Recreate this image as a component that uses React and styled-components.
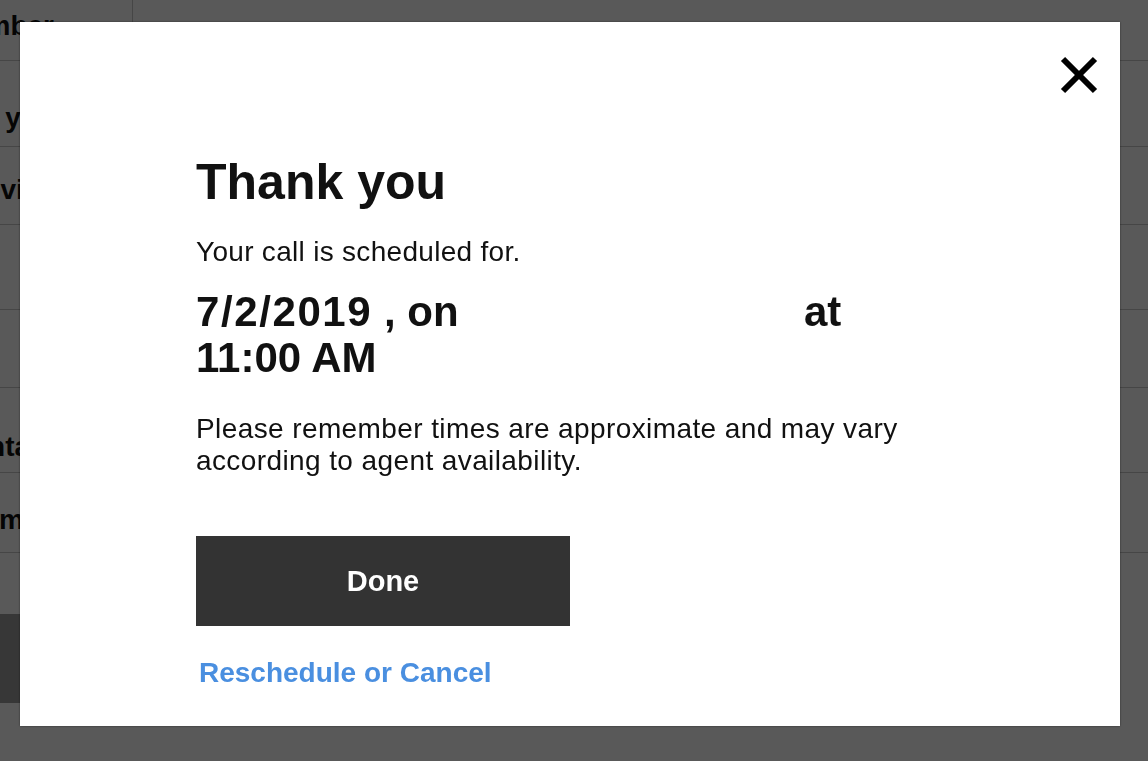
import { Fragment } from "react";
import styled, { createGlobalStyle } from "styled-components";

const GlobalStyle = createGlobalStyle`
  html, body {
    margin: 0;
    padding: 0;
    height: 100%;
    overflow: hidden;
  }
  body {
    font-family: "Liberation Sans", Arial, Helvetica, sans-serif;
    color: #111111;
    background: #ffffff;
  }
`;

// page behind the modal
const Page = styled.div`
  width: 1148px;
  height: 761px;
  display: grid;
  grid-template-columns: 133px 1fr;
  grid-template-rows: 61px 86px 78px 85px 78px 85px 80px 61px 89px 1fr;
  background: #ffffff;
`;

const LabelCell = styled.div`
  display: flex;
  justify-content: flex-end;
  align-items: ${(props) => (props.top ? "flex-start" : "center")};
  padding: ${(props) => (props.top ? "10px 78px 0 0" : `${props.offset || 0}px 78px 0 0`)};
  overflow: hidden;
  white-space: nowrap;
  font-size: 28px;
  font-weight: 700;
  border-bottom: 1px solid #c8c8c8;
  border-right: ${(props) => (props.divider ? "1px solid #c8c8c8" : "none")};
`;

const ValueCell = styled.div`
  border-bottom: 1px solid #c8c8c8;
`;

const Spacer = styled.div`
  grid-column: 1 / span 2;
`;

const PageButton = styled.div`
  grid-column: 1 / span 2;
  background: #9e9e9e;
  margin-right: 300px;
`;

const Overlay = styled.div`
  position: fixed;
  inset: 0;
  background: rgba(0, 0, 0, 0.65);
`;

const Modal = styled.div`
  position: fixed;
  left: 20px;
  top: 22px;
  width: 1100px;
  height: 704px;
  box-sizing: border-box;
  background: #ffffff;
  box-shadow: 0 0 2px rgba(0, 0, 0, 0.5);
  padding: 132px 0 0 176px;
`;

const CloseButton = styled.button`
  position: absolute;
  top: 33px;
  right: 20px;
  width: 42px;
  height: 40px;
  padding: 0;
  border: none;
  background: transparent;
  cursor: pointer;
  display: flex;
  align-items: center;
  justify-content: center;
`;

const Content = styled.div`
  width: 720px;
  display: flex;
  flex-direction: column;
  align-items: flex-start;
`;

const Title = styled.h1`
  margin: 0;
  font-size: 50px;
  line-height: 57.5px;
  font-weight: 700;
  color: #111111;
`;

const Text = styled.p`
  margin: ${(props) => props.margin || "0"};
  font-size: 28px;
  line-height: 32px;
  font-weight: 400;
  letter-spacing: ${(props) => props.spacing || "0.3px"};
  color: #111111;
`;

const Schedule = styled.p`
  margin: 21px 0 0 0;
  font-size: 42px;
  line-height: 46px;
  font-weight: 700;
  color: #111111;
`;

const DateText = styled.span`
  letter-spacing: 1.6px;
`;

const Blank = styled.span`
  display: inline-block;
  width: 322px;
`;

const DoneButton = styled.button`
  margin-top: 59px;
  width: 374px;
  height: 90px;
  border: none;
  background: #333333;
  color: #ffffff;
  font-family: "Liberation Sans", Arial, sans-serif;
  font-size: 29px;
  font-weight: 700;
  cursor: pointer;
`;

const LinkText = styled.a`
  margin: 31px 0 0 3px;
  font-size: 28px;
  line-height: 32px;
  font-weight: 700;
  color: #4a8fe0;
  text-decoration: none;
  cursor: pointer;
`;

const rows = [
  { label: "Phone Number", top: true, divider: true },
  { label: "Who do you", offset: 28 },
  { label: "Device", offset: 8 },
  { label: "" },
  { label: "" },
  { label: "Contact", offset: 34 },
  { label: "Email", offset: 14 },
];

const App = function () {
  return (
    <>
      <GlobalStyle />
      <Page>
        {rows.map((row, i) => (
          <Fragment key={i}>
            <LabelCell top={row.top} divider={row.divider} offset={row.offset}>
              {row.label}
            </LabelCell>
            <ValueCell />
          </Fragment>
        ))}
        <Spacer />
        <PageButton />
      </Page>
      <Overlay />
      <Modal>
        <CloseButton aria-label="Close">
          <svg width="42" height="40" viewBox="0 0 42 40">
            <line x1="5" y1="4" x2="37" y2="36" stroke="#000" strokeWidth="6" />
            <line x1="37" y1="4" x2="5" y2="36" stroke="#000" strokeWidth="6" />
          </svg>
        </CloseButton>
        <Content>
          <Title>Thank you</Title>
          <Text margin="24.5px 0 0 0">Your call is scheduled for.</Text>
          <Schedule>
            <DateText>7/2/2019</DateText> , on <Blank /> at 11:00 AM
          </Schedule>
          <Text margin="32px 0 0 0" spacing="0.4px">
            Please remember times are approximate and may vary according to agent availability.
          </Text>
          <DoneButton type="button">Done</DoneButton>
          <LinkText>Reschedule or Cancel</LinkText>
        </Content>
      </Modal>
    </>
  );
};

export default App;
